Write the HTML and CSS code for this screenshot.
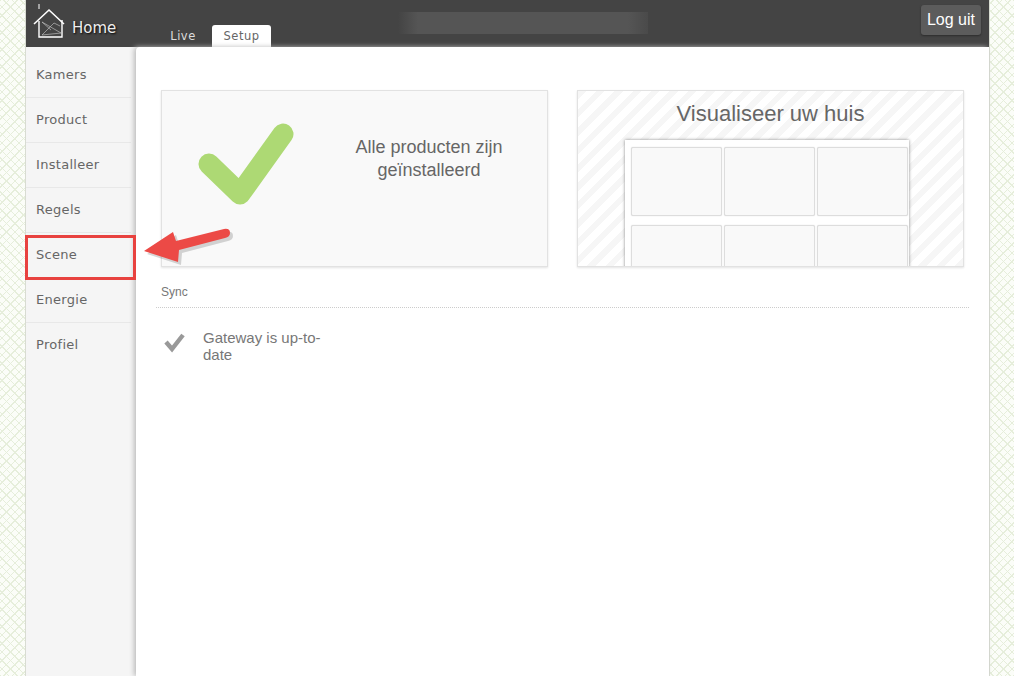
FILE: index.html
```html
<!DOCTYPE html>
<html lang="en">
<head>
  <meta charset="UTF-8">
  <meta name="viewport" content="width=device-width, initial-scale=1.0">
  <title>Home - Setup</title>
  <link rel="stylesheet" href="styles.css">
</head>
<body>
  <div class="wrapper">
    <!-- Top bar -->
    <header class="topbar">
      <div class="logo">
        <svg class="logo-icon" width="34" height="36" viewBox="0 0 34 36" fill="none" stroke="#fff">
          <path d="M1 21 L16 7 L31 21" stroke-width="1.6"/>
          <path d="M6 18 V34 H29 V17" stroke-width="1.4"/>
          <path d="M6 1 V6" stroke-width="1"/>
          <path d="M9 19 L28 30 L9 32 L21 20 L27 23 M9 19 L18 27" stroke-width="0.6" stroke="#ccc"/>
        </svg>
        <span class="logo-text">Home</span>
      </div>
      <nav class="tabs">
        <a class="tab">Live</a>
        <a class="tab tab-active">Setup</a>
      </nav>
      <div class="blurred"></div>
      <button type="button" class="logout">Log uit</button>
    </header>

    <div class="main">
      <!-- Side menu -->
      <ul class="sidemenu">
        <li>Kamers</li>
        <li>Product</li>
        <li>Installeer</li>
        <li>Regels</li>
        <li>Scene</li>
        <li>Energie</li>
        <li>Profiel</li>
      </ul>

      <div class="content">
        <div class="cards">
          <div class="card card-status">
            <svg class="big-check" width="102" height="88" viewBox="0 0 102 88" fill="none">
              <path d="M14 44 L45 74 L88 14" transform="translate(0 0)" stroke="#add974" stroke-width="21" stroke-linecap="round" stroke-linejoin="round"/>
            </svg>
            <p class="status-text">Alle producten zijn<br>geïnstalleerd</p>
          </div>
          <div class="card card-visual">
            <h2 class="visual-title">Visualiseer uw huis</h2>
            <div class="house">
              <div class="room"></div>
              <div class="room"></div>
              <div class="room"></div>
              <div class="room"></div>
              <div class="room"></div>
              <div class="room"></div>
            </div>
          </div>
        </div>

        <div class="sync">
          <div class="sync-title">Sync</div>
          <div class="sync-row">
            <svg class="small-check" width="24" height="22" viewBox="0 0 24 22" fill="none">
              <path d="M3 11 L9 18 L20 4" stroke="#999" stroke-width="4.4"/>
            </svg>
            <p class="sync-text">Gateway is up-to-date</p>
          </div>
        </div>
      </div>
    </div>

    <!-- Annotation on top of the screenshot -->
    <div class="mark-box"></div>
    <svg class="mark-arrow" width="100" height="50" viewBox="0 0 100 50">
      <path d="M2 27 L31 8 L34 17 L82 5 Q88 4 88 9 Q88 13 83 14 L37 26 L36 38 Z" fill="#000" opacity="0.16" transform="translate(3 3)"/>
      <path d="M2 27 L31 8 L34 17 L82 5 Q88 4 88 9 Q88 13 83 14 L37 26 L36 38 Z" fill="#ec4a46"/>
    </svg>
  </div>
</body>
</html>
```

FILE: styles.css
```css
html, body {
  margin: 0;
  height: 100%;
  overflow: hidden;
}
body {
  font-family: "DejaVu Sans", sans-serif;
  color: #666;
  background-color: #fbfdf8;
  background-image:
    repeating-linear-gradient(45deg, #e6eedb 0, #e6eedb 1px, transparent 1px, transparent 6px),
    repeating-linear-gradient(-45deg, #e6eedb 0, #e6eedb 1px, transparent 1px, transparent 6px);
}
.wrapper {
  position: relative;
  width: 963px;
  height: 676px;
  margin-left: 26px;
  background-color: #f5f5f5;
  border-left: 1px solid #d8dcd2;
  border-right: 1px solid #d8dcd2;
  box-sizing: content-box;
  margin-left: 25px;
}

/* top bar */
.topbar {
  display: flex;
  height: 47px;
  background-color: #444;
}
.logo {
  display: flex;
  width: 133px;
  padding-left: 7px;
  box-sizing: border-box;
}
.logo-icon {
  margin-top: 3px;
}
.logo-text {
  margin: 19px 0 0 5px;
  font-size: 15px;
  color: #eee;
  text-shadow: 1px 1px 2px #000;
}
.tabs {
  display: flex;
  align-items: flex-end;
  gap: 5px;
  width: 239px;
}
.tab {
  width: 48px;
  height: 22px;
  line-height: 22px;
  text-align: center;
  font-size: 11.5px;
  letter-spacing: 0.5px;
  color: #ddd;
}
.tab-active {
  width: 59px;
  background-color: #fff;
  color: #666;
  border-radius: 3px 3px 0 0;
}
.blurred {
  width: 250px;
  height: 22px;
  margin-top: 12px;
  background: linear-gradient(90deg, #444, #555 8%, #555 92%, #4a4a4a);
}
.logout {
  width: 60px;
  height: 30px;
  margin: 5px 8px 0 auto;
  padding: 0;
  border: none;
  border-radius: 3px;
  background-color: #5c5c5c;
  box-shadow: 0 1px 2px #2c2c2c;
  font-family: "Liberation Sans", sans-serif;
  font-size: 16px;
  color: #fff;
}

/* layout below the bar */
.main {
  display: flex;
  height: 629px;
}
.sidemenu {
  width: 110px;
  margin: 0;
  padding: 6px 0 0;
  list-style: none;
}
.sidemenu li {
  height: 44px;
  line-height: 44px;
  margin-right: 5px;
  padding-left: 10px;
  border-bottom: 1px solid #e8e8e8;
  font-size: 13px;
  letter-spacing: 0.3px;
  color: #666;
}
.sidemenu li:last-child {
  border-bottom: none;
}
.content {
  flex: 1;
  padding: 43px 20px 0;
  background-color: #fff;
  border-radius: 4px 0 0 0;
  box-shadow: -2px 0 5px #bbb;
}

/* the two cards */
.cards {
  display: flex;
  gap: 29px;
  margin-left: 5px;
}
.card {
  width: 387px;
  height: 177px;
  box-sizing: border-box;
  border: 1px solid #e2e2e2;
  box-shadow: 0 1px 2px #e4e4e4;
}
.card-status {
  display: flex;
  align-items: flex-start;
  background-color: #f9f9f9;
}
.big-check {
  margin: 29px 0 0 33px;
}
.status-text {
  width: 170px;
  margin: 45px 0 0 47px;
  font-family: "Liberation Sans", sans-serif;
  font-size: 18px;
  line-height: 23px;
  text-align: center;
  color: #666;
}
.card-visual {
  overflow: hidden;
  padding-top: 8px;
  background-color: #fff;
  background-image: repeating-linear-gradient(-45deg, #f6f6f6 0, #f6f6f6 6px, #fff 6px, #fff 13px);
}
.visual-title {
  margin: 0;
  font-family: "Liberation Sans", sans-serif;
  font-size: 22px;
  font-weight: normal;
  line-height: 30px;
  text-align: center;
  color: #666;
}
.house {
  display: grid;
  grid-template-columns: repeat(3, 91px);
  grid-auto-rows: 69px;
  gap: 9px 2px;
  width: 278px;
  height: 123px;
  margin: 11px 0 0 47px;
  padding: 7px 0 0 6px;
  box-sizing: content-box;
  overflow: hidden;
  background-color: #fff;
  box-shadow: 0 0 3px #888;
}
.room {
  background-color: #f9f9f9;
  border: 1px solid #ddd;
  border-radius: 2px;
  box-shadow: 0 0 1px #ccc;
}

/* sync section */
.sync {
  margin-top: 18px;
}
.sync-title {
  margin-left: 5px;
  padding-bottom: 7px;
  font-family: "Liberation Sans", sans-serif;
  font-size: 12px;
  line-height: 15px;
  color: #777;
}
.sync-row {
  display: flex;
  padding-top: 21px;
  border-top: 1px dotted #ccc;
}
.small-check {
  margin: 2px 0 0 7px;
}
.sync-text {
  width: 140px;
  margin: 0 0 0 16px;
  font-family: "Liberation Sans", sans-serif;
  font-size: 15px;
  line-height: 17px;
  color: #777;
}

/* red annotation */
.mark-box {
  position: absolute;
  left: -1px;
  top: 235px;
  width: 111px;
  height: 45px;
  box-sizing: border-box;
  border: 3px solid #e8423f;
}
.mark-arrow {
  position: absolute;
  left: 116px;
  top: 224px;
}
```
